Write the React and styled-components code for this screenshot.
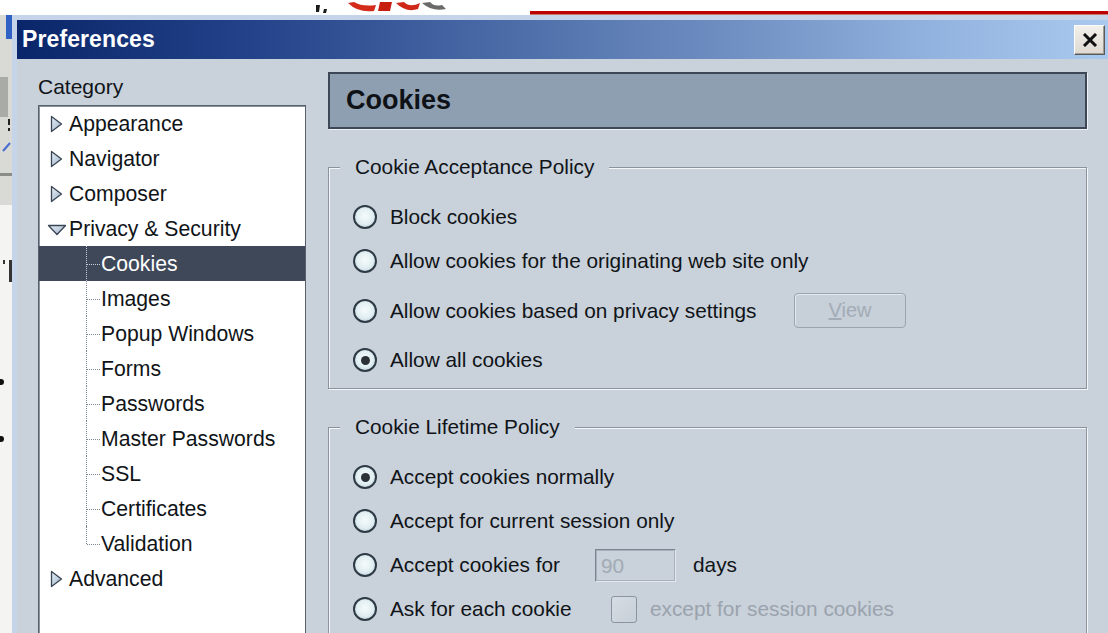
import React from "react"
import styled, { createGlobalStyle } from "styled-components"

const GlobalStyle = createGlobalStyle`
  html, body {
    margin: 0;
    padding: 0;
  }
  body {
    font-family: "Liberation Sans", Arial, sans-serif;
    background: #fff;
  }
`

const Screen = styled.div`
  width: 1108px;
  height: 633px;
  overflow: hidden;
  display: grid;
  grid-template-columns: 12px 1fr;
  grid-template-rows: 15px 1fr;
  background: #fff;
`

const PageStrip = styled.div`
  grid-column: 1 / -1;
  display: flex;
  align-items: flex-end;
  background: #fff;
  overflow: hidden;
`

const PageScraps = styled.svg`
  flex: 0 0 auto;
  margin-left: 304px;
  align-self: stretch;
`

const RedRule = styled.div`
  flex: 1;
  height: 4px;
  margin-left: 76px;
  background: linear-gradient(180deg, #c80000 0%, #b00000 70%, #e8c8c0 100%);
`

const SideStrip = styled.svg`
  display: block;
`

const Dialog = styled.div`
  display: flex;
  flex-direction: column;
  min-width: 0;
  min-height: 0;
  border-left: 5px solid #c6d4ea;
  border-top: 5px solid #c6d4ea;
  box-shadow: inset 0 1px 0 #e6eef8;
`

const TitleBar = styled.div`
  flex: 0 0 39px;
  display: flex;
  align-items: center;
  justify-content: space-between;
  padding-left: 5px;
  background: linear-gradient(
    90deg,
    #0a266a 0%,
    #24438a 22%,
    #4c6ca8 45%,
    #7494c6 68%,
    #96b6e2 86%,
    #a9c9ee 100%
  );
`

const TitleText = styled.span`
  color: #fff;
  font-weight: bold;
  font-size: 23px;
  letter-spacing: 0.1px;
`

const CloseButton = styled.button`
  width: 31px;
  height: 30px;
  margin-right: 3px;
  padding: 0;
  display: grid;
  place-items: center;
  background: linear-gradient(180deg, #f2f0ea 0%, #dedad2 100%);
  border: 1px solid;
  border-color: #ffffff #5a5a5a #5a5a5a #ffffff;
  box-shadow: inset -1px -1px 0 #a09c94;
`

const Body = styled.div`
  flex: 1;
  min-height: 0;
  overflow: hidden;
  display: grid;
  grid-template-columns: 268px 759px;
  column-gap: 22px;
  padding: 13px 0 0 21px;
  background: #c9d1da;
  color: #101418;
  font-size: 20.8px;
`

const CategoryPanel = styled.div`
  display: flex;
  flex-direction: column;
  min-height: 0;
`

const CategoryLabel = styled.div`
  flex: none;
  height: 30px;
  line-height: 30px;
  font-size: 21px;
  margin-bottom: 3px;
`

const Tree = styled.div`
  flex: 1 0 auto;
  background: #fff;
  border: 1px solid #56606c;
  border-bottom: none;
  box-shadow: inset 1px 1px 0 #8c949e;
  font-size: 21.2px;
`

const TreeRow = styled.div`
  position: relative;
  height: 35px;
  display: flex;
  align-items: center;
  padding-left: ${(p) => (p.$child ? "62px" : "8px")};
  background: ${(p) => (p.$selected ? "#3e4859" : "transparent")};
  color: ${(p) => (p.$selected ? "#fff" : "#101418")};
  white-space: nowrap;

  ${(p) =>
    p.$child &&
    `
    &::before {
      content: "";
      position: absolute;
      left: 47px;
      top: 0;
      height: ${p.$last ? "50%" : "100%"};
      border-left: 1px dotted ${p.$selected ? "#c8d0dc" : "#7c8690"};
    }
    &::after {
      content: "";
      position: absolute;
      left: 48px;
      top: 50%;
      width: 13px;
      border-top: 1px dotted ${p.$selected ? "#c8d0dc" : "#7c8690"};
    }
  `}
`

const Twisty = styled.svg`
  flex: 0 0 20px;
  margin-right: 2px;
`

const PrefsPanel = styled.div`
  display: flex;
  flex-direction: column;
  min-height: 0;

  & > * {
    flex: none;
  }
`

const PanelHeader = styled.div`
  height: 53px;
  display: flex;
  align-items: center;
  padding-left: 16px;
  background: #8f9fb2;
  border: 2px solid #3d4755;
  box-shadow: 1px 1px 0 #eef2f6;
  font-size: 27px;
  font-weight: bold;
  color: #0e1216;
`

const Group = styled.div`
  position: relative;
  margin-top: 38px;
  padding: 27px 0 ${(p) => p.$pad || 6}px 24px;
  border: 1px solid #8a939e;
  box-shadow: inset 1px 1px 0 #f4f7fa, 1px 1px 0 #f4f7fa;
  ${(p) => p.$open && "border-bottom: none;"}
`

const Legend = styled.span`
  position: absolute;
  top: -13px;
  left: 11px;
  padding: 0 15px;
  line-height: 24px;
  background: #c9d1da;
`

const OptionRow = styled.div`
  display: flex;
  align-items: center;
  min-height: 44px;
  padding: ${(p) => (p.$tall ? "10px 0" : "0")};
  box-sizing: border-box;
`

const Radio = styled.span`
  flex: 0 0 24px;
  height: 24px;
  box-sizing: border-box;
  border-radius: 50%;
  border: 2px solid #2e3a45;
  background: radial-gradient(circle at 50% 45%, #f6fbfc 0%, #e0eef2 55%, #adc2cb 100%);
  display: grid;
  place-items: center;
  margin-right: 13px;

  &::after {
    content: "";
    width: 9px;
    height: 9px;
    border-radius: 50%;
    background: ${(p) => (p.$checked ? "#2c3138" : "transparent")};
  }
`

const OptionText = styled.span`
  width: ${(p) => (p.$w ? `${p.$w}px` : "auto")};
  flex: 0 0 auto;
  line-height: 24px;
  white-space: nowrap;
  color: ${(p) => (p.$disabled ? "#9aa3ad" : "#101418")};
`

const PushButton = styled.button`
  width: 112px;
  height: 35px;
  border: 1px solid #9aa4ae;
  border-radius: 4px;
  background: #c7cfd9;
  box-shadow: inset 1px 1px 0 #e2e8ee;
  font-family: inherit;
  font-size: 20px;
  color: #a3acb6;
`

const DaysInput = styled.div`
  width: 81px;
  height: 33px;
  box-sizing: border-box;
  border: 1px solid;
  border-color: #7c8692 #e4e9ee #e4e9ee #7c8692;
  outline: 1px solid #a8b1bb;
  outline-offset: -2px;
  padding-left: 5px;
  line-height: 31px;
  color: #a2abb5;
  margin-right: 17px;
`

const CheckBox = styled.span`
  flex: 0 0 26px;
  height: 27px;
  box-sizing: border-box;
  border: 1px solid #8a949f;
  border-radius: 3px;
  background: linear-gradient(135deg, #d6dde4 0%, #c6ced7 100%);
  margin-right: 13px;
`

const tree = [
  { label: "Appearance", twisty: "closed" },
  { label: "Navigator", twisty: "closed" },
  { label: "Composer", twisty: "closed" },
  { label: "Privacy & Security", twisty: "open" },
  { label: "Cookies", child: true, selected: true },
  { label: "Images", child: true },
  { label: "Popup Windows", child: true },
  { label: "Forms", child: true },
  { label: "Passwords", child: true },
  { label: "Master Passwords", child: true },
  { label: "SSL", child: true },
  { label: "Certificates", child: true },
  { label: "Validation", child: true, last: true },
  { label: "Advanced", twisty: "closed" },
]

function TwistyIcon({ open }) {
  return (
    <Twisty width="20" height="18" viewBox="0 0 20 18">
      <defs>
        <linearGradient id="twistFill" x1="0" y1="0" x2="1" y2="1">
          <stop offset="0" stopColor="#e6eef6" />
          <stop offset="1" stopColor="#9fb4ca" />
        </linearGradient>
      </defs>
      {open ? (
        <path
          d="M1.5 5.5 L18.5 5.5 L10 14.5 Z"
          fill="url(#twistFill)"
          stroke="#3a4554"
          strokeWidth="1.3"
          strokeLinejoin="round"
        />
      ) : (
        <path
          d="M4.5 1.5 L14.5 9 L4.5 16.5 Z"
          fill="url(#twistFill)"
          stroke="#3a4554"
          strokeWidth="1.3"
          strokeLinejoin="round"
        />
      )}
    </Twisty>
  )
}

function Option({ checked, children, w }) {
  return (
    <>
      <Radio $checked={checked} />
      <OptionText $w={w}>{children}</OptionText>
    </>
  )
}

export default function App() {
  return (
    <>
      <GlobalStyle />
      <Screen>
        <PageStrip>
          <PageScraps width="150" height="15" viewBox="0 0 150 15">
            <path d="M12 5 L16 5 L15 12 L12 12 Z" fill="#1a1a1a" />
            <path d="M20 9 L23 9 L22 13 L19 13 Z" fill="#1a1a1a" />
            <path d="M44 3 Q54 13 70 11 L72 5 Q58 7 50 2 Z" fill="#d42a1a" />
            <path d="M76 2 L88 2 L86 11 L74 11 Z" fill="#c81e10" />
            <path d="M92 3 Q102 13 114 9 L116 3 Q106 8 100 2 Z" fill="#d02818" />
            <path d="M118 3 Q128 12 142 9 L138 5 Q130 7 126 2 Z" fill="#6a6a6a" />
          </PageScraps>
          <RedRule />
        </PageStrip>

        <SideStrip width="12" height="618" viewBox="0 0 12 618">
          <rect x="0" y="0" width="12" height="618" fill="#f4f4f2" />
          <rect x="0" y="0" width="12" height="190" fill="#d9dad6" />
          <rect x="6" y="0" width="6" height="24" fill="#2f62c4" />
          <rect x="0" y="62" width="8" height="40" fill="#a9aba6" />
          <rect x="8" y="104" width="2" height="6" fill="#222" />
          <rect x="8" y="113" width="2" height="3" fill="#222" />
          <path d="M3 136 L10 128" stroke="#4a6ed0" strokeWidth="2" />
          <rect x="0" y="158" width="12" height="3" fill="#8a8c88" />
          <rect x="9" y="245" width="3" height="22" fill="#333" />
          <rect x="3" y="245" width="2" height="4" fill="#333" />
          <circle cx="1" cy="367" r="3" fill="#111" />
          <circle cx="1" cy="424" r="3" fill="#111" />
        </SideStrip>

        <Dialog>
          <TitleBar>
            <TitleText>Preferences</TitleText>
            <CloseButton aria-label="Close">
              <svg width="16" height="14" viewBox="0 0 16 14">
                <path d="M2 1 L14 13 M14 1 L2 13" stroke="#111" strokeWidth="3" />
              </svg>
            </CloseButton>
          </TitleBar>

          <Body>
            <CategoryPanel>
              <CategoryLabel>Category</CategoryLabel>
              <Tree>
                {tree.map((item) => (
                  <TreeRow
                    key={item.label}
                    $child={item.child}
                    $selected={item.selected}
                    $last={item.last}
                  >
                    {item.twisty && <TwistyIcon open={item.twisty === "open"} />}
                    {item.label}
                  </TreeRow>
                ))}
              </Tree>
            </CategoryPanel>

            <PrefsPanel>
              <PanelHeader>Cookies</PanelHeader>

              <Group>
                <Legend>Cookie Acceptance Policy</Legend>
                <OptionRow>
                  <Option>Block cookies</Option>
                </OptionRow>
                <OptionRow>
                  <Option>Allow cookies for the originating web site only</Option>
                </OptionRow>
                <OptionRow $tall>
                  <Option w={404}>Allow cookies based on privacy settings</Option>
                  <PushButton disabled>
                    <u>V</u>iew
                  </PushButton>
                </OptionRow>
                <OptionRow>
                  <Option checked>Allow all cookies</Option>
                </OptionRow>
              </Group>

              <Group $open $pad={40}>
                <Legend>Cookie Lifetime Policy</Legend>
                <OptionRow>
                  <Option checked>Accept cookies normally</Option>
                </OptionRow>
                <OptionRow>
                  <Option>Accept for current session only</Option>
                </OptionRow>
                <OptionRow>
                  <Option w={205}>Accept cookies for</Option>
                  <DaysInput>90</DaysInput>
                  <OptionText>days</OptionText>
                </OptionRow>
                <OptionRow>
                  <Option w={221}>Ask for each cookie</Option>
                  <CheckBox />
                  <OptionText $disabled>except for session cookies</OptionText>
                </OptionRow>
              </Group>
            </PrefsPanel>
          </Body>
        </Dialog>
      </Screen>
    </>
  )
}
